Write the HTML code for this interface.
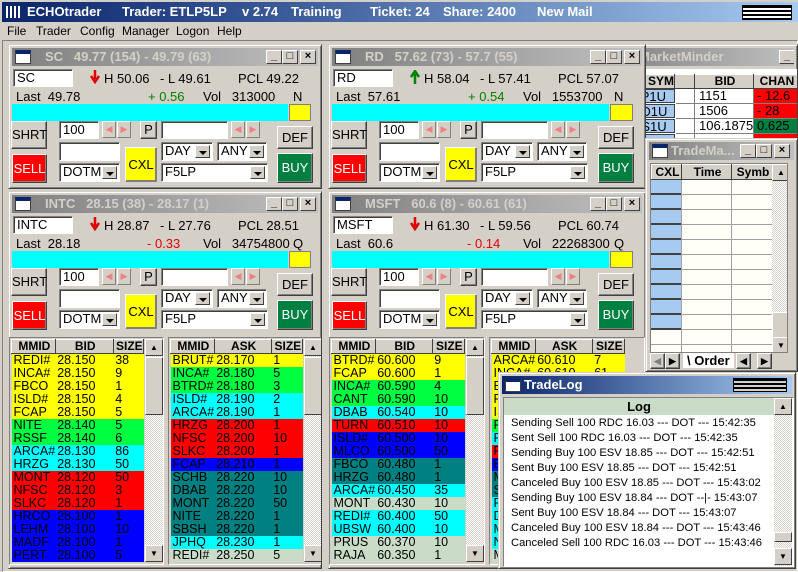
<!DOCTYPE html>
<html><head><meta charset="utf-8"><style>
*{box-sizing:border-box;margin:0;padding:0}
body{width:798px;height:572px;overflow:hidden;background:#d4d0c8;font-family:"Liberation Sans",sans-serif;font-size:12px;position:relative;color:#000}
.a{position:absolute}
.win{position:absolute;background:#d4d0c8;border:1px solid;border-color:#d4d0c8 #404040 #404040 #d4d0c8;box-shadow:inset 1px 1px #fff,inset -1px -1px #808080;overflow:hidden}
.tb{position:absolute;left:3px;right:3px;top:3px;height:18px;background:linear-gradient(90deg,#808080,#c0c0c0);color:#d4d0c8;font-weight:bold;font-size:13px;line-height:18px;white-space:nowrap;overflow:hidden}
.tb.act{background:linear-gradient(90deg,#0a246a,#a6caf0);color:#fff}
.ic{position:absolute;left:3px;top:2px;width:16px;height:14px;background:#fff;border:1px solid #404040;border-top:4px solid #0a246a}
.tbb{position:absolute;top:2px;width:16px;height:14px;background:#d4d0c8;border:1px solid;border-color:#fff #404040 #404040 #fff;color:#000;font-size:11px;line-height:11px;text-align:center;font-weight:bold}
.in{position:absolute;background:#fff;border:1px solid;border-color:#808080 #fff #fff #808080;box-shadow:inset 1px 1px #404040;padding-left:3px;line-height:15px;font-size:13px;white-space:nowrap}
.bt{position:absolute;background:#d4d0c8;border:1px solid;border-color:#fff #404040 #404040 #fff;box-shadow:inset -1px -1px #808080;text-align:center;font-size:13px}
.dd{position:absolute;right:2px;top:2px;bottom:2px;width:15px;background:#d4d0c8;border:1px solid;border-color:#fff #404040 #404040 #fff}
.dd:after{content:"";position:absolute;left:3px;top:5px;border:4px solid transparent;border-top:4px solid #000;border-bottom:0}
.ar{position:absolute;width:14px;height:17px;background:#d4d0c8;border:1px solid;border-color:#fff #808080 #808080 #fff;color:#f08080;font-size:9px;line-height:15px;text-align:center}
table{border-collapse:collapse;font-size:12.5px}
td{height:13px;line-height:13px;padding:0 0 0 2px;white-space:nowrap;overflow:hidden}
.hd td{height:14px;font-weight:bold;background:#d4d0c8;border:1px solid;border-color:#fff #404040 #404040 #fff;text-align:center;font-size:12px}
.Y{background:#ffff00}.G{background:#00ff40}.C{background:#00ffff}.R{background:#ff0000}.B{background:#0000ff}.T{background:#008080}.S{background:#c8dcc8}
.sb{position:absolute;width:18px;background:repeating-conic-gradient(#fff 0 25%,#d4d0c8 0 50%) 0 0/2px 2px}
.sbb{position:absolute;left:0;width:18px;height:17px;background:#d4d0c8;border:1px solid;border-color:#fff #404040 #404040 #fff;font-size:8px;text-align:center;line-height:15px}
.lbl{position:absolute;font-size:13px;white-space:nowrap}
.arw{position:absolute;left:81px;top:25px}
</style></head><body>

<div class="a" style="left:2px;top:2px;width:796px;height:20px;background:linear-gradient(90deg,#0a246a 0%,#3a5a98 35%,#a6caf0 100%);color:#fff;font-weight:bold;font-size:13px;line-height:20px;white-space:nowrap">
<span class="a" style="left:4px;top:4px;width:14px;height:12px;background:repeating-linear-gradient(90deg,#fff 0 2px,#0a246a 2px 4px)"></span>
<span class="a" style="left:25px">ECHOtrader</span>
<span class="a" style="left:120px">Trader: ETLP5LP</span>
<span class="a" style="left:240px">v 2.74</span>
<span class="a" style="left:289px">Training</span>
<span class="a" style="left:368px">Ticket: 24</span>
<span class="a" style="left:441px">Share: 2400</span>
<span class="a" style="left:535px">New Mail</span>
<span class="a" style="left:740px;top:3px;width:50px;height:15px;background:repeating-linear-gradient(180deg,#000 0 2px,#fff 2px 4px);border:1px solid #000"></span>
</div>
<div class="a" style="left:0;top:22px;width:798px;height:18px;font-size:12px;line-height:18px">
<span class="a" style="left:7px">File</span><span class="a" style="left:36px">Trader</span><span class="a" style="left:80px">Config</span><span class="a" style="left:122px">Manager</span><span class="a" style="left:176px">Logon</span><span class="a" style="left:217px">Help</span>
</div>
<div class="a" style="left:2px;top:40px;width:796px;height:532px;border:1px solid;border-color:#808080 #fff #fff #808080"></div>

<!-- MarketMinder -->
<div class="win" style="left:600px;top:44px;width:198px;height:100px">
 <div class="tb"><span class="a" style="left:35px">MarketMinder</span><div class="tbb" style="left:175px">_</div></div>
 <div class="a" style="left:3px;top:24px;width:195px;height:76px;background:#fff"></div>
 <table class="a" style="left:28px;top:29px;width:170px">
  <tr class="hd"><td style="width:45px;text-align:right">SYM</td><td style="width:20px"></td><td style="width:59px">BID</td><td>CHAN</td></tr>
 </table>
 <div class="a" style="left:28px;top:44px;width:170px;font-size:13px">
  <div class="a" style="top:0;left:2px;width:44px;height:14px;background:#a6caf0;border:1px solid #404040;line-height:13px;text-align:right;padding-right:8px">SP1U</div>
  <div class="a" style="top:15px;left:2px;width:44px;height:14px;background:#a6caf0;border:1px solid #404040;line-height:13px;text-align:right;padding-right:8px">ND1U</div>
  <div class="a" style="top:30px;left:2px;width:44px;height:14px;background:#a6caf0;border:1px solid #404040;line-height:13px;text-align:right;padding-right:8px">US1U</div>
  <div class="a" style="top:45px;left:2px;width:44px;height:14px;background:#a6caf0;border:1px solid #404040"></div>
  <div class="a" style="top:0;left:70px;line-height:14px">1151</div>
  <div class="a" style="top:15px;left:70px;line-height:14px">1506</div>
  <div class="a" style="top:30px;left:70px;line-height:14px">106.1875</div>
  <div class="a R" style="top:0;left:125px;width:45px;height:14px;line-height:14px;padding-left:3px">- 12.6</div>
  <div class="a R" style="top:15px;left:125px;width:45px;height:14px;line-height:14px;padding-left:3px">- 28</div>
  <div class="a" style="top:30px;left:125px;width:45px;height:14px;line-height:14px;padding-left:3px;background:#008040">0.625</div>
  <div class="a R" style="top:45px;left:125px;width:45px;height:14px"></div>
  <div class="a" style="top:0;left:65px;width:1px;height:60px;background:#808080"></div>
  <div class="a" style="top:0;left:124px;width:1px;height:60px;background:#808080"></div>
  <div class="a" style="top:14px;left:47px;width:123px;height:1px;background:#808080"></div>
  <div class="a" style="top:29px;left:47px;width:123px;height:1px;background:#808080"></div>
  <div class="a" style="top:44px;left:47px;width:123px;height:1px;background:#808080"></div>
 </div>
</div>

<!-- SC -->
<div class="win" style="left:8px;top:44px;width:314px;height:145px">
 <div class="tb"><div class="ic"></div><span class="a" style="left:33px">SC&nbsp;&nbsp;&nbsp;49.77 (154) - 49.79 (63)</span><div class="tbb" style="right:36px">_</div><div class="tbb" style="right:20px">□</div><div class="tbb" style="right:2px">×</div></div>
 <div class="in" style="left:4px;top:24px;width:60px;height:18px">SC</div>
 <svg class="arw" width="10" height="14"><path d="M5 0V9M1 6L5 12L9 6" stroke="#e00000" stroke-width="2.5" fill="none"/></svg>
 <div class="lbl" style="left:95px;top:26px">H 50.06</div>
 <div class="lbl" style="left:151px;top:26px">- L 49.61</div>
 <div class="lbl" style="left:229px;top:26px">PCL 49.22</div>
 <div class="lbl" style="left:7px;top:44px">Last&nbsp; 49.78</div>
 <div class="lbl" style="left:139px;top:44px;color:#008000">+ 0.56</div>
 <div class="lbl" style="left:194px;top:44px">Vol&nbsp;&nbsp; 313000</div>
 <div class="lbl" style="left:284px;top:44px">N</div>
 <div class="a" style="left:3px;top:59px;width:276px;height:17px;background:#00ffff"></div>
 <div class="a" style="left:280px;top:59px;width:22px;height:17px;background:#ffff00;border:1px solid #808080"></div>
 <div class="bt" style="left:2px;top:76px;width:36px;height:28px;line-height:26px">SHRT</div>
 <div class="bt" style="left:3px;top:109px;width:35px;height:29px;line-height:27px;background:#ff0000;color:#fff">SELL</div>
 <div class="in" style="left:50px;top:76px;width:40px;height:18px">100</div>
 <div class="ar" style="left:93px;top:76px">◀</div><div class="ar" style="left:108px;top:76px">▶</div>
 <div class="bt" style="left:131px;top:76px;width:17px;height:18px;line-height:16px">P</div>
 <div class="in" style="left:152px;top:76px;width:67px;height:18px"></div>
 <div class="ar" style="left:222px;top:76px">◀</div><div class="ar" style="left:237px;top:76px">▶</div>
 <div class="bt" style="left:268px;top:81px;width:36px;height:23px;line-height:21px">DEF</div>
 <div class="in" style="left:50px;top:97px;width:61px;height:19px"></div>
 <div class="bt" style="left:116px;top:102px;width:32px;height:35px;line-height:33px;background:#ffff00;border-color:#fff #808080 #808080 #fff">CXL</div>
 <div class="in" style="left:152px;top:97px;width:52px;height:19px">DAY<div class="dd"></div></div>
 <div class="in" style="left:208px;top:97px;width:50px;height:19px">ANY<div class="dd"></div></div>
 <div class="in" style="left:50px;top:118px;width:61px;height:19px">DOTM<div class="dd"></div></div>
 <div class="in" style="left:152px;top:118px;width:107px;height:19px">F5LP<div class="dd"></div></div>
 <div class="bt" style="left:268px;top:108px;width:36px;height:30px;line-height:28px;background:#008040;color:#fff">BUY</div>
</div>

<!-- RD -->
<div class="win" style="left:328px;top:44px;width:318px;height:145px">
 <div class="tb"><div class="ic"></div><span class="a" style="left:33px">RD&nbsp;&nbsp;&nbsp;57.62 (73) - 57.7 (55)</span><div class="tbb" style="right:36px">_</div><div class="tbb" style="right:20px">□</div><div class="tbb" style="right:2px">×</div></div>
 <div class="in" style="left:4px;top:24px;width:60px;height:18px">RD</div>
 <svg class="arw" width="10" height="14"><path d="M5 14V4M1 7L5 1L9 7" stroke="#008000" stroke-width="2.5" fill="none"/></svg>
 <div class="lbl" style="left:95px;top:26px">H 58.04</div>
 <div class="lbl" style="left:151px;top:26px">- L 57.41</div>
 <div class="lbl" style="left:229px;top:26px">PCL 57.07</div>
 <div class="lbl" style="left:7px;top:44px">Last&nbsp; 57.61</div>
 <div class="lbl" style="left:139px;top:44px;color:#008000">+ 0.54</div>
 <div class="lbl" style="left:194px;top:44px">Vol&nbsp;&nbsp; 1553700</div>
 <div class="lbl" style="left:285px;top:44px">N</div>
 <div class="a" style="left:3px;top:59px;width:277px;height:17px;background:#00ffff"></div>
 <div class="a" style="left:281px;top:59px;width:23px;height:17px;background:#ffff00;border:1px solid #808080"></div>
 <div class="bt" style="left:2px;top:76px;width:36px;height:28px;line-height:26px">SHRT</div>
 <div class="bt" style="left:3px;top:109px;width:35px;height:29px;line-height:27px;background:#ff0000;color:#fff">SELL</div>
 <div class="in" style="left:50px;top:76px;width:40px;height:18px">100</div>
 <div class="ar" style="left:93px;top:76px">◀</div><div class="ar" style="left:108px;top:76px">▶</div>
 <div class="bt" style="left:131px;top:76px;width:17px;height:18px;line-height:16px">P</div>
 <div class="in" style="left:152px;top:76px;width:67px;height:18px"></div>
 <div class="ar" style="left:222px;top:76px">◀</div><div class="ar" style="left:237px;top:76px">▶</div>
 <div class="bt" style="left:269px;top:81px;width:36px;height:23px;line-height:21px">DEF</div>
 <div class="in" style="left:50px;top:97px;width:61px;height:19px"></div>
 <div class="bt" style="left:116px;top:102px;width:32px;height:35px;line-height:33px;background:#ffff00;border-color:#fff #808080 #808080 #fff">CXL</div>
 <div class="in" style="left:152px;top:97px;width:52px;height:19px">DAY<div class="dd"></div></div>
 <div class="in" style="left:208px;top:97px;width:50px;height:19px">ANY<div class="dd"></div></div>
 <div class="in" style="left:50px;top:118px;width:61px;height:19px">DOTM<div class="dd"></div></div>
 <div class="in" style="left:152px;top:118px;width:107px;height:19px">F5LP<div class="dd"></div></div>
 <div class="bt" style="left:269px;top:108px;width:36px;height:30px;line-height:28px;background:#008040;color:#fff">BUY</div>
</div>

<!-- INTC -->
<div class="win" style="left:8px;top:191px;width:314px;height:378px">
 <div class="tb"><div class="ic"></div><span class="a" style="left:33px">INTC&nbsp;&nbsp;&nbsp;28.15 (38) - 28.17 (1)</span><div class="tbb" style="right:36px">_</div><div class="tbb" style="right:20px">□</div><div class="tbb" style="right:2px">×</div></div>
 <div class="in" style="left:4px;top:24px;width:60px;height:18px">INTC</div>
 <svg class="arw" width="10" height="14"><path d="M5 0V9M1 6L5 12L9 6" stroke="#e00000" stroke-width="2.5" fill="none"/></svg>
 <div class="lbl" style="left:95px;top:26px">H 28.87</div>
 <div class="lbl" style="left:151px;top:26px">- L 27.76</div>
 <div class="lbl" style="left:229px;top:26px">PCL 28.51</div>
 <div class="lbl" style="left:7px;top:44px">Last&nbsp; 28.18</div>
 <div class="lbl" style="left:138px;top:44px;color:#e00000">- 0.33</div>
 <div class="lbl" style="left:194px;top:44px">Vol&nbsp;&nbsp; 34754800</div>
 <div class="lbl" style="left:284px;top:44px">Q</div>
 <div class="a" style="left:3px;top:59px;width:276px;height:17px;background:#00ffff"></div>
 <div class="a" style="left:280px;top:59px;width:22px;height:17px;background:#ffff00;border:1px solid #808080"></div>
 <div class="bt" style="left:2px;top:76px;width:36px;height:28px;line-height:26px">SHRT</div>
 <div class="bt" style="left:3px;top:109px;width:35px;height:29px;line-height:27px;background:#ff0000;color:#fff">SELL</div>
 <div class="in" style="left:50px;top:76px;width:40px;height:18px">100</div>
 <div class="ar" style="left:93px;top:76px">◀</div><div class="ar" style="left:108px;top:76px">▶</div>
 <div class="bt" style="left:131px;top:76px;width:17px;height:18px;line-height:16px">P</div>
 <div class="in" style="left:152px;top:76px;width:67px;height:18px"></div>
 <div class="ar" style="left:222px;top:76px">◀</div><div class="ar" style="left:237px;top:76px">▶</div>
 <div class="bt" style="left:268px;top:81px;width:36px;height:23px;line-height:21px">DEF</div>
 <div class="in" style="left:50px;top:97px;width:61px;height:19px"></div>
 <div class="bt" style="left:116px;top:102px;width:32px;height:35px;line-height:33px;background:#ffff00;border-color:#fff #808080 #808080 #fff">CXL</div>
 <div class="in" style="left:152px;top:97px;width:52px;height:19px">DAY<div class="dd"></div></div>
 <div class="in" style="left:208px;top:97px;width:50px;height:19px">ANY<div class="dd"></div></div>
 <div class="in" style="left:50px;top:118px;width:61px;height:19px">DOTM<div class="dd"></div></div>
 <div class="in" style="left:152px;top:118px;width:107px;height:19px">F5LP<div class="dd"></div></div>
 <div class="bt" style="left:268px;top:108px;width:36px;height:30px;line-height:28px;background:#008040;color:#fff">BUY</div>
 <div class="a" style="left:0;top:145px;width:155px;height:228px;border:1px solid;border-color:#808080 #fff #fff #808080;background:#d4d0c8;overflow:hidden">
  <table class="a" style="left:1px;top:1px;width:133px">
   <tr class="hd"><td style="width:39px">MMID</td><td style="width:58px">BID</td><td>SIZE</td></tr>
   <tr class="Y"><td>REDI#</td><td>28.150</td><td>38</td></tr>
   <tr class="Y"><td>INCA#</td><td>28.150</td><td>9</td></tr>
   <tr class="Y"><td>FBCO</td><td>28.150</td><td>1</td></tr>
   <tr class="Y"><td>ISLD#</td><td>28.150</td><td>4</td></tr>
   <tr class="Y"><td>FCAP</td><td>28.150</td><td>5</td></tr>
   <tr class="G"><td>NITE</td><td>28.140</td><td>5</td></tr>
   <tr class="G"><td>RSSF</td><td>28.140</td><td>6</td></tr>
   <tr class="C"><td>ARCA#</td><td>28.130</td><td>86</td></tr>
   <tr class="C"><td>HRZG</td><td>28.130</td><td>50</td></tr>
   <tr class="R"><td>MONT</td><td>28.120</td><td>50</td></tr>
   <tr class="R"><td>NFSC</td><td>28.120</td><td>3</td></tr>
   <tr class="R"><td>SLKC</td><td>28.120</td><td>1</td></tr>
   <tr class="B"><td>HRCO</td><td>28.100</td><td>1</td></tr>
   <tr class="B"><td>LEHM</td><td>28.100</td><td>10</td></tr>
   <tr class="B"><td>MADF</td><td>28.100</td><td>1</td></tr>
   <tr class="B"><td>PERT</td><td>28.100</td><td>5</td></tr>
  </table>
  <div class="sb" style="left:135px;top:1px;height:223px"><div class="sbb" style="top:0">▲</div><div class="sbb" style="top:18px;height:58px"></div><div class="sbb" style="top:206px">▼</div></div>
 </div>
 <div class="a" style="left:159px;top:145px;width:155px;height:228px;border:1px solid;border-color:#808080 #fff #fff #808080;background:#d4d0c8;overflow:hidden">
  <table class="a" style="left:1px;top:1px;width:133px">
   <tr class="hd"><td style="width:40px">MMID</td><td style="width:57px">ASK</td><td>SIZE</td></tr>
   <tr class="Y"><td>BRUT#</td><td>28.170</td><td>1</td></tr>
   <tr class="G"><td>INCA#</td><td>28.180</td><td>5</td></tr>
   <tr class="G"><td>BTRD#</td><td>28.180</td><td>3</td></tr>
   <tr class="C"><td>ISLD#</td><td>28.190</td><td>2</td></tr>
   <tr class="C"><td>ARCA#</td><td>28.190</td><td>1</td></tr>
   <tr class="R"><td>HRZG</td><td>28.200</td><td>1</td></tr>
   <tr class="R"><td>NFSC</td><td>28.200</td><td>10</td></tr>
   <tr class="R"><td>SLKC</td><td>28.200</td><td>1</td></tr>
   <tr class="B"><td>FCAP</td><td>28.210</td><td>1</td></tr>
   <tr class="T"><td>SCHB</td><td>28.220</td><td>10</td></tr>
   <tr class="T"><td>DBAB</td><td>28.220</td><td>10</td></tr>
   <tr class="T"><td>MONT</td><td>28.220</td><td>50</td></tr>
   <tr class="T"><td>NITE</td><td>28.220</td><td>1</td></tr>
   <tr class="T"><td>SBSH</td><td>28.220</td><td>1</td></tr>
   <tr class="C"><td>JPHQ</td><td>28.230</td><td>1</td></tr>
   <tr class="S"><td>REDI#</td><td>28.250</td><td>5</td></tr>
  </table>
  <div class="sb" style="left:135px;top:1px;height:223px"><div class="sbb" style="top:0">▲</div><div class="sbb" style="top:18px;height:58px"></div><div class="sbb" style="top:206px">▼</div></div>
 </div>
</div>

<!-- MSFT -->
<div class="win" style="left:328px;top:191px;width:318px;height:378px">
 <div class="tb"><div class="ic"></div><span class="a" style="left:33px">MSFT&nbsp;&nbsp;&nbsp;60.6 (8) - 60.61 (61)</span><div class="tbb" style="right:36px">_</div><div class="tbb" style="right:20px">□</div><div class="tbb" style="right:2px">×</div></div>
 <div class="in" style="left:4px;top:24px;width:60px;height:18px">MSFT</div>
 <svg class="arw" width="10" height="14"><path d="M5 0V9M1 6L5 12L9 6" stroke="#e00000" stroke-width="2.5" fill="none"/></svg>
 <div class="lbl" style="left:95px;top:26px">H 61.30</div>
 <div class="lbl" style="left:151px;top:26px">- L 59.56</div>
 <div class="lbl" style="left:229px;top:26px">PCL 60.74</div>
 <div class="lbl" style="left:7px;top:44px">Last&nbsp; 60.6</div>
 <div class="lbl" style="left:138px;top:44px;color:#e00000">- 0.14</div>
 <div class="lbl" style="left:194px;top:44px">Vol&nbsp;&nbsp; 22268300</div>
 <div class="lbl" style="left:285px;top:44px">Q</div>
 <div class="a" style="left:3px;top:59px;width:277px;height:17px;background:#00ffff"></div>
 <div class="a" style="left:281px;top:59px;width:23px;height:17px;background:#ffff00;border:1px solid #808080"></div>
 <div class="bt" style="left:2px;top:76px;width:36px;height:28px;line-height:26px">SHRT</div>
 <div class="bt" style="left:3px;top:109px;width:35px;height:29px;line-height:27px;background:#ff0000;color:#fff">SELL</div>
 <div class="in" style="left:50px;top:76px;width:40px;height:18px">100</div>
 <div class="ar" style="left:93px;top:76px">◀</div><div class="ar" style="left:108px;top:76px">▶</div>
 <div class="bt" style="left:131px;top:76px;width:17px;height:18px;line-height:16px">P</div>
 <div class="in" style="left:152px;top:76px;width:67px;height:18px"></div>
 <div class="ar" style="left:222px;top:76px">◀</div><div class="ar" style="left:237px;top:76px">▶</div>
 <div class="bt" style="left:269px;top:81px;width:36px;height:23px;line-height:21px">DEF</div>
 <div class="in" style="left:50px;top:97px;width:61px;height:19px"></div>
 <div class="bt" style="left:116px;top:102px;width:32px;height:35px;line-height:33px;background:#ffff00;border-color:#fff #808080 #808080 #fff">CXL</div>
 <div class="in" style="left:152px;top:97px;width:52px;height:19px">DAY<div class="dd"></div></div>
 <div class="in" style="left:208px;top:97px;width:50px;height:19px">ANY<div class="dd"></div></div>
 <div class="in" style="left:50px;top:118px;width:61px;height:19px">DOTM<div class="dd"></div></div>
 <div class="in" style="left:152px;top:118px;width:107px;height:19px">F5LP<div class="dd"></div></div>
 <div class="bt" style="left:269px;top:108px;width:36px;height:30px;line-height:28px;background:#008040;color:#fff">BUY</div>
 <div class="a" style="left:0;top:145px;width:156px;height:228px;border:1px solid;border-color:#808080 #fff #fff #808080;background:#d4d0c8;overflow:hidden">
  <table class="a" style="left:1px;top:1px;width:134px">
   <tr class="hd"><td style="width:40px">MMID</td><td style="width:57px">BID</td><td>SIZE</td></tr>
   <tr class="Y"><td>BTRD#</td><td>60.600</td><td>9</td></tr>
   <tr class="Y"><td>FCAP</td><td>60.600</td><td>1</td></tr>
   <tr class="G"><td>INCA#</td><td>60.590</td><td>4</td></tr>
   <tr class="G"><td>CANT</td><td>60.590</td><td>10</td></tr>
   <tr class="C"><td>DBAB</td><td>60.540</td><td>10</td></tr>
   <tr class="R"><td>TURN</td><td>60.510</td><td>10</td></tr>
   <tr class="B"><td>ISLD#</td><td>60.500</td><td>10</td></tr>
   <tr class="B"><td>MLCO</td><td>60.500</td><td>50</td></tr>
   <tr class="T"><td>FBCO</td><td>60.480</td><td>1</td></tr>
   <tr class="T"><td>HRZG</td><td>60.480</td><td>1</td></tr>
   <tr class="C"><td>ARCA#</td><td>60.450</td><td>35</td></tr>
   <tr class="S"><td>MONT</td><td>60.430</td><td>10</td></tr>
   <tr class="C"><td>REDI#</td><td>60.400</td><td>50</td></tr>
   <tr class="C"><td>UBSW</td><td>60.400</td><td>10</td></tr>
   <tr class="S"><td>PRUS</td><td>60.370</td><td>10</td></tr>
   <tr class="S"><td>RAJA</td><td>60.350</td><td>1</td></tr>
  </table>
  <div class="sb" style="left:136px;top:1px;height:223px"><div class="sbb" style="top:0">▲</div><div class="sbb" style="top:18px;height:58px"></div><div class="sbb" style="top:206px">▼</div></div>
 </div>
 <div class="a" style="left:160px;top:145px;width:156px;height:228px;border:1px solid;border-color:#808080 #fff #fff #808080;background:#d4d0c8;overflow:hidden">
  <table class="a" style="left:1px;top:1px;width:134px">
   <tr class="hd"><td style="width:40px">MMID</td><td style="width:57px">ASK</td><td>SIZE</td></tr>
   <tr class="Y"><td>ARCA#</td><td>60.610</td><td>7</td></tr>
   <tr class="Y"><td>INCA#</td><td>60.610</td><td>61</td></tr>
   <tr class="Y"><td>BTRD#</td><td>60.620</td><td>1</td></tr>
   <tr class="Y"><td>REDI#</td><td>60.620</td><td>1</td></tr>
   <tr class="Y"><td>ISLD#</td><td>60.620</td><td>1</td></tr>
   <tr class="G"><td>FCAP</td><td>60.630</td><td>1</td></tr>
   <tr class="C"><td>FBCO</td><td>60.640</td><td>1</td></tr>
   <tr class="R"><td>FLTT</td><td>60.650</td><td>1</td></tr>
   <tr class="B"><td>EXCH</td><td>60.660</td><td>1</td></tr>
   <tr class="T"><td>MONT</td><td>60.670</td><td>1</td></tr>
   <tr class="T"><td>SBSH</td><td>60.670</td><td>1</td></tr>
   <tr class="C"><td>FACT</td><td>60.680</td><td>1</td></tr>
   <tr class="C"><td>DBAB</td><td>60.680</td><td>1</td></tr>
   <tr class="C"><td>MLCO</td><td>60.680</td><td>1</td></tr>
   <tr class="C"><td>NITE</td><td>60.680</td><td>1</td></tr>
   <tr class="S"><td>MADF</td><td>60.690</td><td>1</td></tr>
  </table>
 </div>
</div>

<!-- TradeManager -->
<div class="win" style="left:645px;top:138px;width:153px;height:234px">
 <div class="tb"><div class="ic"></div><span class="a" style="left:22px">TradeMa...</span><div class="tbb" style="right:38px">_</div><div class="tbb" style="right:22px">□</div><div class="tbb" style="right:4px">×</div></div>
 <div class="a" style="left:4px;top:24px;width:138px;height:190px;background:#fffff8;border:1px solid #808080;overflow:hidden">
  <table class="a" style="left:0;top:0;width:122px">
   <tr class="hd"><td style="width:30px;height:15px">CXL</td><td style="width:50px">Time</td><td>Symb</td></tr>
  </table>
  <div class="a" style="left:0;top:16px;width:122px;height:175px;background:repeating-linear-gradient(180deg,transparent 0 14px,#a0a0a0 14px 15px)"></div>
  <div class="a" style="left:0;top:16px;width:30px;height:150px;background:repeating-linear-gradient(180deg,#a6caf0 0 13px,#404040 13px 15px)"></div>
  <div class="a" style="left:30px;top:16px;width:1px;height:175px;background:#a0a0a0"></div>
  <div class="a" style="left:80px;top:16px;width:1px;height:175px;background:#a0a0a0"></div>
  <div class="sb" style="left:121px;top:0;height:190px"><div class="sbb" style="top:0">▲</div><div class="sbb" style="top:148px;height:26px"></div><div class="sbb" style="top:173px">▼</div></div>
 </div>
 <div class="a" style="left:4px;top:214px;width:140px;height:16px;font-size:13px;font-weight:bold">
  <div class="bt" style="left:0;top:0;width:15px;height:16px;font-size:9px;line-height:14px;color:#808080">◀</div>
  <div class="bt" style="left:15px;top:0;width:15px;height:16px;font-size:9px;line-height:14px">▶</div>
  <span class="a" style="left:33px;top:0;background:#fff;padding:0 4px;line-height:15px">\ Order</span>
  <div class="bt" style="left:86px;top:0;width:15px;height:16px;font-size:9px;line-height:14px">◀</div>
  <div class="bt" style="left:107px;top:0;width:15px;height:16px;font-size:9px;line-height:14px">▶</div>
 </div>
</div>

<!-- TradeLog -->
<div class="win" style="left:498px;top:372px;width:298px;height:197px">
 <div class="tb act"><div class="ic"></div><span class="a" style="left:22px">TradeLog</span>
  <span class="a" style="left:231px;top:2px;width:54px;height:14px;background:repeating-linear-gradient(180deg,#000 0 2px,#d4d0c8 2px 4px);border:1px solid #000"></span></div>
 <div class="a" style="left:4px;top:24px;width:291px;height:170px;background:#fff;border:1px solid;border-color:#808080 #fff #fff #808080;overflow:hidden">
  <div class="a" style="left:0;top:0;width:270px;height:17px;background:#c8dcc8;text-align:center;font-weight:bold;font-size:13px;line-height:17px">Log</div>
  <div class="a" style="left:7px;top:18px;font-size:11.2px;line-height:15px;white-space:nowrap">
   Sending Sell 100 RDC 16.03 --- DOT --- 15:42:35<br>
   Sent Sell 100 RDC 16.03 --- DOT --- 15:42:35<br>
   Sending Buy 100 ESV 18.85 --- DOT --- 15:42:51<br>
   Sent Buy 100 ESV 18.85 --- DOT --- 15:42:51<br>
   Canceled Buy 100 ESV 18.85 --- DOT --- 15:43:02<br>
   Sending Buy 100 ESV 18.84 --- DOT --|- 15:43:07<br>
   Sent Buy 100 ESV 18.84 --- DOT --- 15:43:07<br>
   Canceled Buy 100 ESV 18.84 --- DOT --- 15:43:46<br>
   Canceled Sell 100 RDC 16.03 --- DOT --- 15:43:46
  </div>
  <div class="sb" style="left:270px;top:0;height:168px"><div class="sbb" style="top:0">▲</div><div class="sbb" style="top:134px;height:10px"></div><div class="sbb" style="top:150px">▼</div></div>
 </div>
</div>
</body></html>
